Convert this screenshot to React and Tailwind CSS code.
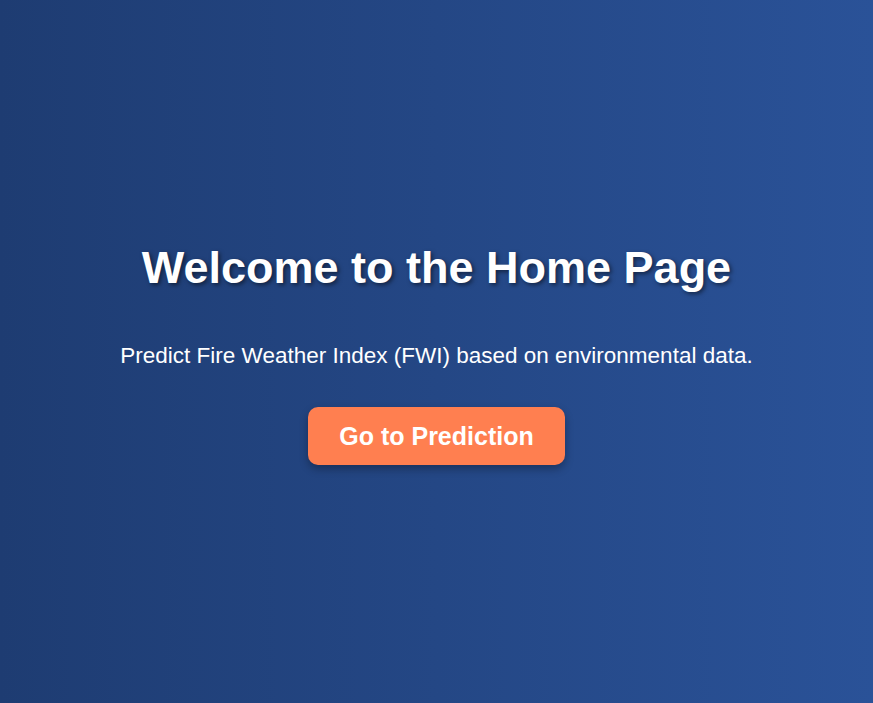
export default function App() {
  return (
    <div className="flex min-h-screen flex-col items-center justify-center bg-[linear-gradient(to_right,#1e3c72,#2a5298)] px-4 pt-[3px] text-center font-['Liberation_Sans',Arial,sans-serif] text-white">
      <h1 className="text-[45px] font-bold leading-[56px] [text-shadow:2px_2px_4px_rgba(0,0,0,0.5)]">
        Welcome to the Home Page
      </h1>
      <p className="mt-[47px] text-[22.5px] leading-[26px]">
        Predict Fire Weather Index (FWI) based on environmental data.
      </p>
      <button className="mb-[2px] mt-[38px] rounded-[10px] bg-[#ff7f50] px-[31px] py-[15px] text-[25px] font-bold leading-[28px] text-white shadow-[0_4px_8px_rgba(0,0,0,0.3)]">
        Go to Prediction
      </button>
    </div>
  )
}
